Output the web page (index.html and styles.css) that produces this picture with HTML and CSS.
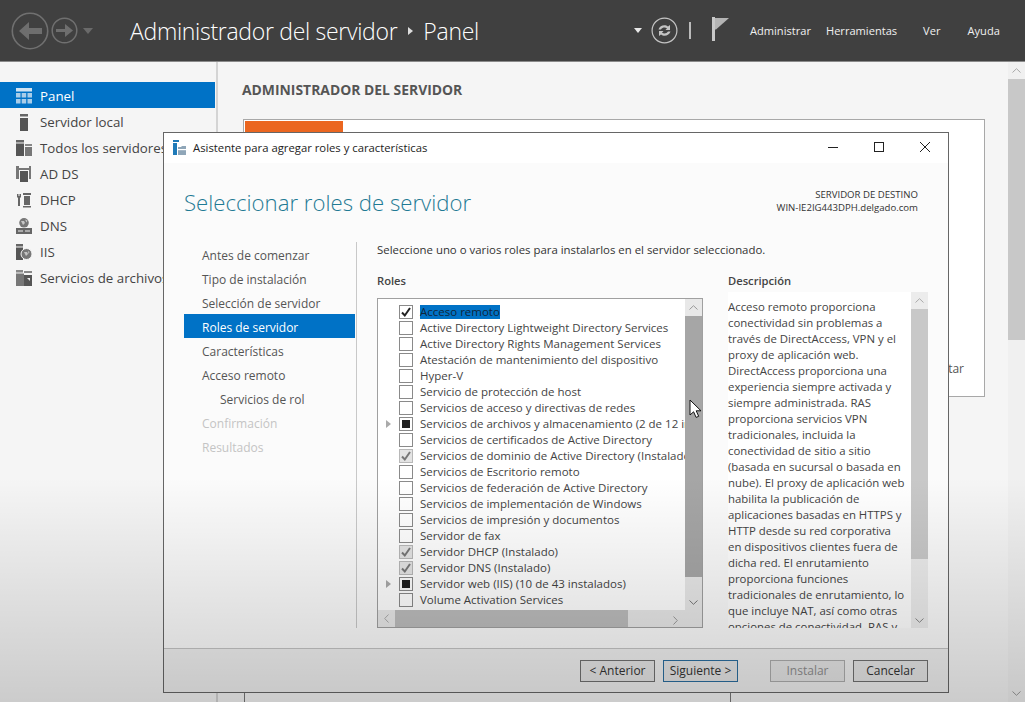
FILE: index.html
```html
<!DOCTYPE html>
<html lang="es">
<head>
  <meta charset="UTF-8" />
  <title>Administrador del servidor</title>
  <link rel="stylesheet" href="styles.css">
</head>
<body>
  <header class="topbar">
    <div class="nav-buttons">
      <svg class="nav-back" width="38" height="38" viewBox="0 0 38 38"><circle cx="19" cy="19" r="17.7" fill="none" stroke="#707070" stroke-width="1.6"/><path d="M8 19 L18 10 V16 H31 V22 H18 V28 Z" fill="#6e6e6e"/></svg>
      <svg class="nav-forward" width="27" height="27" viewBox="0 0 27 27"><circle cx="13.5" cy="13.5" r="12.3" fill="none" stroke="#707070" stroke-width="1.5"/><path d="M5 12 H14 V7 L22 13.5 L14 20 V15 H5 Z" fill="#6e6e6e"/></svg>
      <span class="caret caret-dim"></span>
    </div>
    <div class="crumbs">
      <span>Administrador del servidor</span>
      <span class="crumb-arrow"></span>
      <span>Panel</span>
    </div>
    <div class="tools">
      <span class="caret"></span>
      <svg class="refresh" width="27" height="27" viewBox="0 0 27 27"><circle cx="13.5" cy="13.5" r="12.4" fill="none" stroke="#c4c4c4" stroke-width="1.2"/><path d="M7.5 12.5 C8.5 8.5 14 7 17 9.5 L19 8 V13 H14.5 L16 11.3 C14 10 11.3 10.4 10 12.5 Z M19.5 14.5 C18.5 18.5 13 20 10 17.5 L8 19 V14 H12.5 L11 15.7 C13 17 15.7 16.6 17 14.5 Z" fill="#c4c4c4"/></svg>
      <span class="tool-sep"></span>
      <svg class="flag" width="18" height="24" viewBox="0 0 18 24"><rect x="0" y="0" width="3" height="24" fill="#c8c8c8"/><path d="M3 1 H17 L4 12.5 H3 Z" fill="#b4b4b4"/></svg>
    </div>
    <nav class="menu">
      <span class="m-admin">Administrar</span>
      <span class="m-tools">Herramientas</span>
      <span class="m-ver">Ver</span>
      <span class="m-help">Ayuda</span>
    </nav>
  </header>

  <div class="workspace">
    <aside class="sidebar">
      <ul class="side-list">
        <li class="side-item active">
          <svg width="16" height="16" viewBox="0 0 16 16"><rect width="16" height="3.5" fill="#cfe3f3"/><path d="M0 5h4.5v4.5H0zM5.7 5h4.5v4.5H5.7zM11.5 5H16v4.5h-4.5zM0 11h4.5v4.5H0zM5.7 11h4.5v4.5H5.7zM11.5 11H16v4.5h-4.5z" fill="#a9cde9"/></svg>
          Panel
        </li>
        <li class="side-item">
          <svg width="16" height="17" viewBox="0 0 16 17"><rect x="4" y="0" width="8" height="2.5" fill="#666"/><rect x="4" y="4" width="8" height="13" fill="#555"/></svg>
          Servidor local
        </li>
        <li class="side-item">
          <svg width="16" height="16" viewBox="0 0 16 16"><rect x="0" y="0" width="8" height="2.5" fill="#666"/><rect x="0" y="3.5" width="8" height="12.5" fill="#555"/><rect x="9" y="4" width="7" height="2" fill="#888"/><rect x="9" y="7" width="7" height="9" fill="#777"/></svg>
          Todos los servidores
        </li>
        <li class="side-item">
          <svg width="16" height="16" viewBox="0 0 16 16"><path d="M0 0h3v2h10V0h2v13h-2V4H3v9H0z" fill="#777"/><rect x="4" y="5" width="8" height="11" fill="#555"/></svg>
          AD DS
        </li>
        <li class="side-item">
          <svg width="16" height="16" viewBox="0 0 16 16"><path d="M1 2h1.5v2h1V2H5v3.5H4V14H2V5.5H1zM7 1h8v2H7zM8 4h6v9H8zM7 14h8v1.5H7z" fill="#666"/></svg>
          DHCP
        </li>
        <li class="side-item">
          <svg width="16" height="16" viewBox="0 0 16 16"><circle cx="8" cy="4.8" r="4.8" fill="#777"/><path d="M5 3h3l1 2-2 2zM9 1.5l2.5 1-1 2z" fill="#c8c8c8"/><rect x="0" y="10" width="16" height="6" fill="#666"/><rect x="2" y="12.5" width="5" height="1" fill="#eee"/><rect x="9" y="12.5" width="5" height="1" fill="#eee"/></svg>
          DNS
        </li>
        <li class="side-item">
          <svg width="16" height="16" viewBox="0 0 16 16"><rect x="0" y="0" width="7" height="2.5" fill="#666"/><rect x="0" y="3.5" width="7" height="12.5" fill="#555"/><circle cx="10.5" cy="10" r="5.5" fill="#777" stroke="#f5f5f5"/><path d="M8 8h3l1 2-2 2zM12 7l1.5 1-1 2z" fill="#c4c4c4"/></svg>
          IIS
        </li>
        <li class="side-item">
          <svg width="16" height="16" viewBox="0 0 16 16"><rect x="0" y="0" width="7" height="2.5" fill="#888"/><rect x="8" y="1" width="8" height="2" fill="#888"/><rect x="0" y="3.5" width="8" height="12.5" fill="#777"/><path d="M8 5h8v11H8z" fill="#555"/><path d="M11 8h3v3z" fill="#eee"/></svg>
          Servicios de archivos
        </li>
      </ul>
    </aside>

    <main class="main">
      <h1 class="main-title">ADMINISTRADOR DEL SERVIDOR</h1>
      <section class="card">
        <div class="card-orange"></div>
        <div class="card-foot">Ocultar</div>
      </section>
      <section class="card-low"></section>
    </main>

    <div class="page-scroll">
      <span class="sb-btn"><svg width="9" height="5" viewBox="0 0 9 5"><path d="M.5 4.5 4.5.7l4 3.8" fill="none" stroke="#a8a8a8"/></svg></span>
      <span class="page-thumb"></span>
      <span class="page-down"><svg width="9" height="5" viewBox="0 0 9 5"><path d="M.5.5l4 3.8 4-3.8" fill="none" stroke="#999"/></svg></span>
    </div>
  </div>

  <div class="dialog">
    <div class="dlg-title">
      <svg width="15" height="15" viewBox="0 0 15 15"><rect x="0" y="0" width="6" height="2" fill="#1f7ab8"/><rect x="0" y="3" width="4" height="12" fill="#1f7ab8"/><path d="M5 7h3l1-1h4v9H5z" fill="#8fa6b8"/><rect x="5" y="9" width="10" height="1.2" fill="#fff"/></svg>
      <span class="dlg-title-text">Asistente para agregar roles y características</span>
      <div class="win-btns">
        <svg width="10" height="10" viewBox="0 0 10 10"><path d="M0 5.5h10" stroke="#222"/></svg>
        <svg width="10" height="10" viewBox="0 0 10 10"><rect x=".5" y=".5" width="9" height="9" fill="none" stroke="#222"/></svg>
        <svg width="10" height="10" viewBox="0 0 10 10"><path d="M0 0l10 10M10 0L0 10" stroke="#222"/></svg>
      </div>
    </div>

    <div class="dlg-head">
      <h2>Seleccionar roles de servidor</h2>
      <div class="dest">SERVIDOR DE DESTINO<br>WIN-IE2IG443DPH.delgado.com</div>
    </div>

    <div class="dlg-body">
      <ul class="steps">
        <li>Antes de comenzar</li>
        <li>Tipo de instalación</li>
        <li>Selección de servidor</li>
        <li class="current">Roles de servidor</li>
        <li>Características</li>
        <li>Acceso remoto</li>
        <li class="sub">Servicios de rol</li>
        <li class="off">Confirmación</li>
        <li class="off">Resultados</li>
      </ul>

      <div class="pane">
        <p class="intro">Seleccione uno o varios roles para instalarlos en el servidor seleccionado.</p>
        <div class="columns">
          <div class="roles">
            <div class="col-label">Roles</div>
            <div class="listbox">
              <ul class="role-list">
                <li><span class="box"><svg width="12" height="12" viewBox="0 0 12 12"><path d="M2 6.5l2.8 3L10 2" fill="none" stroke="#222" stroke-width="2"/></svg></span><span class="picked">Acceso remoto</span></li>
                <li><span class="box"></span>Active Directory Lightweight Directory Services</li>
                <li><span class="box"></span>Active Directory Rights Management Services</li>
                <li><span class="box"></span>Atestación de mantenimiento del dispositivo</li>
                <li><span class="box"></span>Hyper-V</li>
                <li><span class="box"></span>Servicio de protección de host</li>
                <li><span class="box"></span>Servicios de acceso y directivas de redes</li>
                <li><span class="expander"></span><span class="box part"></span>Servicios de archivos y almacenamiento (2 de 12 instalados)</li>
                <li><span class="box"></span>Servicios de certificados de Active Directory</li>
                <li><span class="box done"><svg width="12" height="12" viewBox="0 0 12 12"><path d="M2 6.5l2.8 3L10 2" fill="none" stroke="#777" stroke-width="2"/></svg></span>Servicios de dominio de Active Directory (Instalado)</li>
                <li><span class="box"></span>Servicios de Escritorio remoto</li>
                <li><span class="box"></span>Servicios de federación de Active Directory</li>
                <li><span class="box"></span>Servicios de implementación de Windows</li>
                <li><span class="box"></span>Servicios de impresión y documentos</li>
                <li><span class="box"></span>Servidor de fax</li>
                <li><span class="box done"><svg width="12" height="12" viewBox="0 0 12 12"><path d="M2 6.5l2.8 3L10 2" fill="none" stroke="#777" stroke-width="2"/></svg></span>Servidor DHCP (Instalado)</li>
                <li><span class="box done"><svg width="12" height="12" viewBox="0 0 12 12"><path d="M2 6.5l2.8 3L10 2" fill="none" stroke="#777" stroke-width="2"/></svg></span>Servidor DNS (Instalado)</li>
                <li><span class="expander"></span><span class="box part"></span>Servidor web (IIS) (10 de 43 instalados)</li>
                <li><span class="box"></span>Volume Activation Services</li>
              </ul>
              <div class="vbar">
                <span class="sb-btn"><svg width="9" height="5" viewBox="0 0 9 5"><path d="M.5 4.5 4.5.7l4 3.8" fill="none" stroke="#999"/></svg></span>
                <span class="vthumb"></span>
                <span class="sb-fill"><svg width="9" height="5" viewBox="0 0 9 5"><path d="M.5.5l4 3.8 4-3.8" fill="none" stroke="#777"/></svg></span>
              </div>
              <div class="hbar">
                <span class="sb-btn"><svg width="5" height="9" viewBox="0 0 5 9"><path d="M4.5.5.7 4.5l3.8 4" fill="none" stroke="#aaa"/></svg></span>
                <span class="hthumb"></span>
                <span class="hbar-end"><svg width="5" height="9" viewBox="0 0 5 9"><path d="M.5.5l3.8 4-3.8 4" fill="none" stroke="#999"/></svg></span>
              </div>
            </div>
          </div>

          <div class="desc">
            <div class="col-label">Descripción</div>
            <div class="desc-box">
              <p class="desc-text">Acceso remoto proporciona<br>conectividad sin problemas a<br>través de DirectAccess, VPN y el<br>proxy de aplicación web.<br>DirectAccess proporciona una<br>experiencia siempre activada y<br>siempre administrada. RAS<br>proporciona servicios VPN<br>tradicionales, incluida la<br>conectividad de sitio a sitio<br>(basada en sucursal o basada en<br>nube). El proxy de aplicación web<br>habilita la publicación de<br>aplicaciones basadas en HTTPS y<br>HTTP desde su red corporativa<br>en dispositivos clientes fuera de<br>dicha red. El enrutamiento<br>proporciona funciones<br>tradicionales de enrutamiento, lo<br>que incluye NAT, así como otras<br>opciones de conectividad. RAS y</p>
              <div class="dbar">
                <span class="sb-btn"><svg width="9" height="5" viewBox="0 0 9 5"><path d="M.5 4.5 4.5.7l4 3.8" fill="none" stroke="#aaa"/></svg></span>
                <span class="dthumb"></span>
                <span class="sb-fill"><svg width="9" height="5" viewBox="0 0 9 5"><path d="M.5.5l4 3.8 4-3.8" fill="none" stroke="#888"/></svg></span>
              </div>
            </div>
          </div>
        </div>
      </div>
    </div>

    <div class="dlg-foot">
      <button class="btn">&lt; Anterior</button>
      <button class="btn primary">Siguiente &gt;</button>
      <button class="btn disabled">Instalar</button>
      <button class="btn">Cancelar</button>
    </div>
  </div>

  <svg class="cursor" width="14" height="20" viewBox="0 0 14 20"><path d="M1 1v15l3.6-3.2 2.5 5.6 2.6-1.1-2.5-5.5H12z" fill="#fff" stroke="#111"/></svg>
  <div class="shade"></div>
</body>
</html>
```
FILE: styles.css
```css
:root {
  --blue: #0072c6;
  --text: #333;
  --page: #f5f5f5;
  --ui-font: "Open Sans", "Noto Sans", sans-serif;
}

* {
  box-sizing: border-box;
}

html,
body {
  height: 100%;
}

body {
  margin: 0;
  overflow: hidden;
  position: relative;
  background: var(--page);
  color: var(--text);
  font-family: var(--ui-font);
  font-size: 12px;
}

ul {
  list-style: none;
  margin: 0;
  padding: 0;
}

/* top bar */
.topbar {
  height: 62px;
  background: #404040;
  border-bottom: 1px solid #8a8a8a;
  display: flex;
  align-items: center;
  color: #fff;
}

.nav-buttons {
  display: flex;
  align-items: center;
  width: 130px;
  padding-left: 11px;
}

.nav-forward {
  margin-left: 2px;
}

.caret {
  width: 0;
  height: 0;
  border-left: 4px solid transparent;
  border-right: 4px solid transparent;
  border-top: 5px solid #e8e8e8;
}

.caret-dim {
  margin-left: 5px;
  border-left-width: 5px;
  border-right-width: 5px;
  border-top: 6px solid #6a6a6a;
}

.crumbs {
  display: flex;
  align-items: center;
  font-size: 23px;
  font-weight: 300;
  letter-spacing: -0.3px;
}

.crumb-arrow {
  width: 0;
  height: 0;
  margin: 0 10px 0 11px;
  border-top: 4px solid transparent;
  border-bottom: 4px solid transparent;
  border-left: 5px solid #ddd;
}

.tools {
  margin-left: auto;
  display: flex;
  align-items: center;
}

.refresh {
  margin-left: 9px;
}

.tool-sep {
  width: 2px;
  height: 17px;
  margin: 0 21px 0 11px;
  background: #bbb;
}

.flag {
  margin-top: -4px;
}

.menu {
  display: flex;
  margin-left: 20px;
  width: 275px;
  font-size: 11.1px;
  color: #f0f0f0;
}

.m-tools {
  margin-left: 15px;
}

.m-ver {
  margin-left: 26px;
}

.m-help {
  margin-left: 27px;
}

/* page behind the dialog */
.workspace {
  display: flex;
  height: 640px;
}

.sidebar {
  width: 218px;
  flex: none;
  padding-top: 20px;
  border-right: 2px solid #d4d4d4;
  overflow: hidden;
}

.side-item {
  height: 26px;
  display: flex;
  align-items: center;
  gap: 8px;
  padding: 2px 0 0 16px;
  font-size: 13.3px;
  white-space: nowrap;
  color: #444;
}

.side-item.active {
  background: var(--blue);
  color: #fff;
  margin-right: 1px;
}

.main {
  flex: 1;
  padding: 18px 0 0 24px;
  position: relative;
}

.main-title {
  margin: 0 0 19px;
  font-size: 13.9px;
  font-weight: 700;
  color: #555;
  line-height: 20px;
}

.card {
  width: 742px;
  height: 278px;
  margin-left: 1px;
  background: #fff;
  border: 1px solid #a8a8a8;
  padding: 1px;
  display: flex;
  flex-direction: column;
  justify-content: space-between;
}

.card-orange {
  width: 98px;
  height: 40px;
  background: #eb6620;
}

.card-foot {
  text-align: right;
  padding: 0 19px 18px 0;
  color: #555;
}

.card-low {
  width: 487px;
  height: 300px;
  margin: 40px 0 0 2px;
  border: 1px solid #777;
}

.page-scroll {
  width: 17px;
  flex: none;
  background: #f0f0f0;
  display: flex;
  flex-direction: column;
}

.page-thumb {
  height: 261px;
  background: #c8c8c8;
}

.page-down {
  margin-top: auto;
  height: 17px;
  display: flex;
  align-items: center;
  justify-content: center;
}

/* dialog window */
.dialog {
  position: absolute;
  left: 163px;
  top: 132px;
  width: 786px;
  height: 561px;
  background: #fbfbfb;
  border: 1px solid #666;
  display: flex;
  flex-direction: column;
}

.dlg-title {
  height: 30px;
  flex: none;
  background: #fff;
  display: flex;
  align-items: center;
  padding: 0 0 2px 9px;
}

.dlg-title-text {
  margin-left: 5px;
  font-size: 11.3px;
  color: #222;
}

.win-btns {
  margin-left: auto;
  display: flex;
  gap: 36px;
  padding-right: 18px;
}

.dlg-head {
  height: 79px;
  flex: none;
  display: flex;
  justify-content: space-between;
  padding: 25px 30px 0 20px;
}

.dlg-head h2 {
  margin: 0;
  font-size: 22.2px;
  line-height: 30px;
  font-weight: 300;
  color: #1f7a94;
}

.dest {
  text-align: right;
  font-size: 9.6px;
  line-height: 13px;
  color: #333;
}

.dlg-body {
  flex: 1;
  min-height: 0;
  display: flex;
}

.steps {
  width: 192px;
  flex: none;
  padding: 0 0 0 20px;
}

.steps li {
  width: 171px;
  height: 24px;
  line-height: 27px;
  padding-left: 18px;
  font-size: 12px;
  color: #555;
  overflow: hidden;
}

.steps .current {
  background: var(--blue);
  color: #fff;
}

.steps .sub {
  padding-left: 36px;
}

.steps .off {
  color: #c4c4c4;
}

.pane {
  flex: 1;
  height: 386px;
  border-left: 1px solid #c8c8c8;
  padding-left: 20px;
}

.intro {
  margin: 0;
  height: 30px;
  line-height: 16px;
  font-size: 11.4px;
  color: #333;
}

.columns {
  display: flex;
  height: 356px;
}

.col-label {
  height: 20px;
  line-height: 18px;
  font-size: 11.2px;
  font-weight: 600;
  color: #444;
}

.roles {
  width: 351px;
}

.listbox {
  position: relative;
  width: 326px;
  height: 330px;
  margin-top: 6px;
  background: #fff;
  border: 1px solid #a0a0a0;
  overflow: hidden;
}

.role-list {
  width: 307px;
  height: 311px;
  overflow: hidden;
  padding-top: 5px;
}

.role-list li {
  position: relative;
  height: 16px;
  line-height: 16px;
  padding-left: 21px;
  font-size: 11.5px;
  white-space: nowrap;
  display: flex;
  align-items: center;
  color: #444;
}

.box {
  width: 14px;
  height: 14px;
  flex: none;
  margin-right: 7px;
  background: #fff;
  border: 1px solid #8a8a8a;
  display: flex;
  align-items: center;
  justify-content: center;
}

.box.done {
  background: #e4e4e4;
  border-color: #b8b8b8;
}

.box.part::after {
  content: "";
  width: 8px;
  height: 8px;
  background: #222;
}

.picked {
  background: var(--blue);
  color: #10263a;
  line-height: 14px;
}

.expander {
  position: absolute;
  left: 8px;
  top: 4px;
  width: 0;
  height: 0;
  border-top: 4px solid transparent;
  border-bottom: 4px solid transparent;
  border-left: 5px solid #aaa;
}

.vbar {
  position: absolute;
  top: 0;
  right: 0;
  width: 17px;
  height: 311px;
  background: #e8e8e8;
  display: flex;
  flex-direction: column;
}

.sb-btn {
  height: 17px;
  flex: none;
  display: flex;
  align-items: center;
  justify-content: center;
}

.vthumb {
  height: 261px;
  background: #a6a6a6;
}

.sb-fill {
  flex: 1;
  display: flex;
  align-items: flex-end;
  justify-content: center;
  padding-bottom: 5px;
}

.hbar {
  display: flex;
  height: 17px;
  background: #e8e8e8;
}

.hbar .sb-btn {
  width: 17px;
}

.hthumb {
  width: 233px;
  background: #bcbcbc;
}

.hbar-end {
  flex: 1;
  padding: 2px 0 0 45px;
}

.desc {
  width: 200px;
}

.desc-box {
  display: flex;
  height: 336px;
  background: #fff;
}

.desc-text {
  width: 184px;
  height: 336px;
  margin: 0;
  padding-top: 7px;
  overflow: hidden;
  line-height: 16px;
  font-size: 11.4px;
  white-space: nowrap;
  color: #444;
}

.dbar {
  width: 17px;
  height: 336px;
  background: #ececec;
  display: flex;
  flex-direction: column;
}

.dthumb {
  height: 250px;
  background: #c8c8c8;
}

.dlg-foot {
  height: 44px;
  flex: none;
  display: flex;
  align-items: center;
  gap: 8px;
  padding-right: 20px;
  border-top: 1px solid #c4c4c4;
  background: #f0f0f0;
  justify-content: flex-end;
}

.btn {
  width: 75px;
  height: 22px;
  padding: 0;
  font-family: inherit;
  font-size: 12px;
  color: #333;
  background: #e6e6e6;
  border: 1px solid #707070;
}

.btn.primary {
  border-color: #2a6d9e;
  margin-right: 24px;
}

.btn.disabled {
  color: #8e8e8e;
  border-color: #adadad;
}

.cursor {
  position: absolute;
  left: 689px;
  top: 399px;
}

/* darkening that runs over the lower part of the whole capture */
.shade {
  position: absolute;
  inset: 0;
  pointer-events: none;
  background: linear-gradient(to bottom, rgba(0, 0, 0, 0) 68%, rgba(0, 0, 0, 0.17) 100%);
}
```
